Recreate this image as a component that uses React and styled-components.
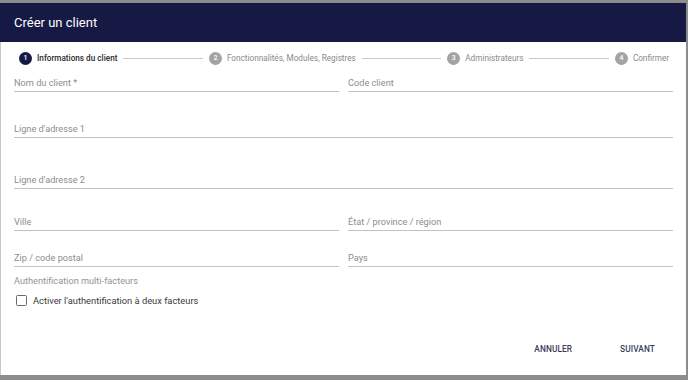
import styled, { createGlobalStyle } from "styled-components";

const GlobalStyle = createGlobalStyle`
  html, body {
    margin: 0;
    padding: 0;
    background: #8c8c8c;
    font-family: Roboto, "Liberation Sans", sans-serif;
  }
`;

const Dialog = styled.div`
  margin-top: 3px;
  width: 686px;
  height: 372px;
  background: #fff;
  display: flex;
  flex-direction: column;
  box-sizing: border-box;
`;

const Header = styled.div`
  height: 39px;
  background: #161944;
  color: #fff;
  display: flex;
  align-items: center;
  padding: 0 14px;
  font-size: 13px;
  flex-shrink: 0;
`;

const Body = styled.div`
  flex: 1;
  display: flex;
  flex-direction: column;
  border-left: 1px solid #c8c8c8;
  padding: 8px 13px 0 13px;
`;

const Stepper = styled.div`
  display: flex;
  align-items: center;
  height: 16px;
  padding: 0 4px 0 5px;
`;

const Step = styled.div`
  display: flex;
  align-items: center;
  gap: 5px;
  font-size: 8.2px;
  color: ${(p) => (p.$active ? "#2c2c2c" : "#8a8a8a")};
  font-weight: ${(p) => (p.$active ? 500 : 400)};
  white-space: nowrap;
`;

const Dot = styled.span`
  flex-shrink: 0;
  width: 13px;
  height: 13px;
  border-radius: 50%;
  background: ${(p) => (p.$active ? "#161944" : "#a3a3a3")};
  color: #fff;
  font-size: 7px;
  font-weight: 500;
  display: flex;
  align-items: center;
  justify-content: center;
`;

const Connector = styled.div`
  flex: 1;
  height: 1px;
  background: #c9c9c9;
  margin: 0 6px;
`;

const Row = styled.div`
  display: flex;
  gap: 9px;
  margin-top: ${(p) => p.$gap}px;
`;

const Field = styled.div`
  flex: 1;
  height: 11px;
  line-height: 11px;
  padding-bottom: 3px;
  font-size: 9.2px;
  color: #8e8e8e;
  border-bottom: 1px solid #c2c2c2;
  white-space: nowrap;
`;

const SectionLabel = styled.div`
  margin-top: 8px;
  height: 12px;
  line-height: 12px;
  font-size: 9.2px;
  color: #939393;
`;

const CheckRow = styled.label`
  margin-top: 6px;
  display: flex;
  align-items: center;
  gap: 6px;
  height: 14px;
  font-size: 9.3px;
  color: #3a3a3a;
  padding-left: 2px;
`;

const Box = styled.span`
  flex-shrink: 0;
  width: 9px;
  height: 9px;
  border: 1.3px solid #6a6a6a;
  border-radius: 1.5px;
`;

const Footer = styled.div`
  margin-top: auto;
  display: flex;
  justify-content: flex-end;
  gap: 16px;
  padding: 0 2px 8px 0;
`;

const Button = styled.button`
  height: 36px;
  padding: 0 16px;
  border: none;
  background: transparent;
  font-family: Roboto, "Liberation Sans", sans-serif;
  font-size: 8.3px;
  font-weight: 500;
  color: #3b3b5c;
  letter-spacing: 0.1px;
  cursor: pointer;
`;

const steps = [
  "Informations du client",
  "Fonctionnalités, Modules, Registres",
  "Administrateurs",
  "Confirmer",
];

export default function App() {
  return (
    <>
      <GlobalStyle />
      <Dialog>
        <Header>Créer un client</Header>
        <Body>
          <Stepper>
            {steps.map((s, i) => (
              <>
                {i > 0 && <Connector key={"c" + i} />}
                <Step key={s} $active={i === 0}>
                  <Dot $active={i === 0}>{i + 1}</Dot>
                  {s}
                </Step>
              </>
            ))}
          </Stepper>
          <Row $gap={11}>
            <Field>Nom du client *</Field>
            <Field>Code client</Field>
          </Row>
          <Row $gap={31}>
            <Field>Ligne d'adresse 1</Field>
          </Row>
          <Row $gap={36}>
            <Field>Ligne d'adresse 2</Field>
          </Row>
          <Row $gap={27}>
            <Field>Ville</Field>
            <Field>État / province / région</Field>
          </Row>
          <Row $gap={21}>
            <Field>Zip / code postal</Field>
            <Field>Pays</Field>
          </Row>
          <SectionLabel>Authentification multi-facteurs</SectionLabel>
          <CheckRow>
            <Box />
            Activer l'authentification à deux facteurs
          </CheckRow>
          <Footer>
            <Button>ANNULER</Button>
            <Button>SUIVANT</Button>
          </Footer>
        </Body>
      </Dialog>
    </>
  );
}
